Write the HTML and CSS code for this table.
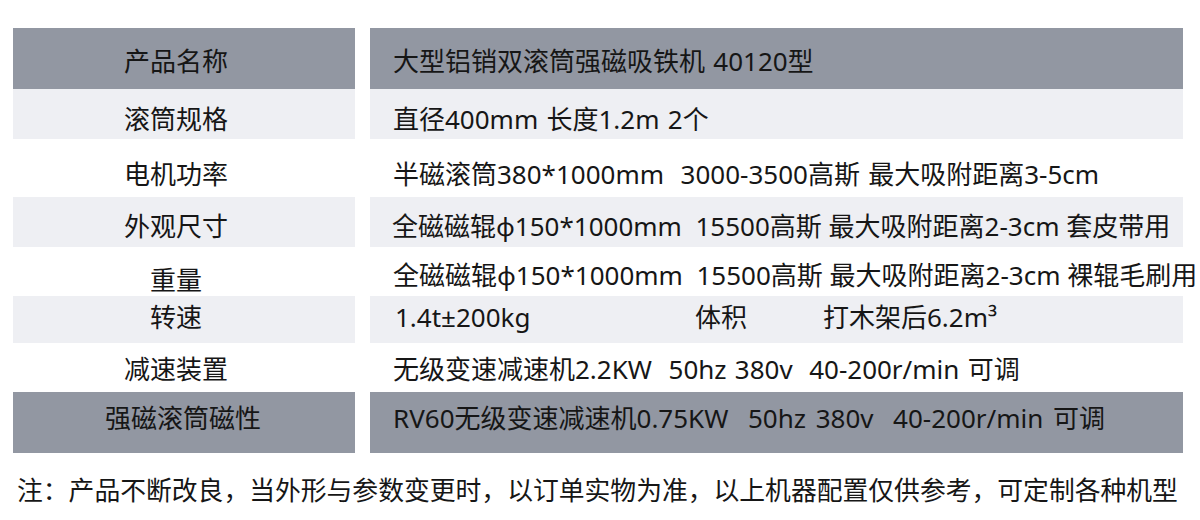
FILE: index.html
```html
<!DOCTYPE html>
<html lang="zh-CN">
<head>
<meta charset="utf-8">
<title>参数表</title>
<link rel="stylesheet" href="styles.css">
</head>
<body>
<div class="page">
  <div class="spec">
    <div class="row dark r1"><div class="key">产品名称</div><div class="val">大型铝销双滚筒强磁吸铁机 40120型</div></div>
    <div class="row light r2"><div class="key">滚筒规格</div><div class="val">直径400mm 长度1.2m 2个</div></div>
    <div class="row r3"><div class="key">电机功率</div><div class="val">半磁滚筒380*1000mm  3000-3500高斯 最大吸附距离3-5cm</div></div>
    <div class="row light r4"><div class="key">外观尺寸</div><div class="val">全磁磁辊φ150*1000mm  15500高斯 最大吸附距离2-3cm 套皮带用</div></div>
    <div class="row r5"><div class="key">重量</div><div class="val">全磁磁辊φ150*1000mm  15500高斯 最大吸附距离2-3cm 裸辊毛刷用</div></div>
    <div class="row light r6"><div class="key">转速</div><div class="val"><span class="c1">1.4t±200kg</span><span class="c2">体积</span><span>打木架后6.2m³</span></div></div>
    <div class="row r7"><div class="key">减速装置</div><div class="val">无级变速减速机2.2KW  50hz 380v  40-200r/min 可调</div></div>
    <div class="row dark r8"><div class="key">强磁滚筒磁性</div><div class="val">RV60无级变速减速机0.75KW  50hz 380v  40-200r/min 可调</div></div>
  </div>
  <p class="note">注：产品不断改良，当外形与参数变更时，以订单实物为准，以上机器配置仅供参考，可定制各种机型</p>
</div>
</body>
</html>
```

FILE: styles.css
```css
html, body {
  margin: 0;
  padding: 0;
  background: #ffffff;
}

.page {
  width: 1200px;
  height: 520px;
  padding: 28px 0 0 13px;
  box-sizing: border-box;
  font-family: "Noto Sans", "Noto Sans CJK SC", sans-serif;
  color: #161616;
  overflow: hidden;
}

.spec {
  display: flex;
  flex-direction: column;
}

.row {
  display: grid;
  grid-template-columns: 342px 813px;
  column-gap: 15px;
  font-size: 26px;
  line-height: 26px;
  white-space: pre;
}

.key,
.val {
  box-sizing: border-box;
}

.key {
  text-align: center;
  padding-right: 16px;
}

.val {
  padding-left: 23px;
  word-spacing: 1.5px;
}

.dark .key,
.dark .val {
  background: #9297a2;
}

.light .key,
.light .val {
  background: #eeeff3;
}

.r1 { height: 61px; }
.r1 .key, .r1 .val { padding-top: 20px; }

.r2 { height: 50px; }
.r2 .key, .r2 .val { padding-top: 17px; }

.r3 { height: 58px; }
.r3 .key, .r3 .val { padding-top: 22px; }

.r4 { height: 50px; }
.r4 .key, .r4 .val { padding-top: 16px; }
.r4 .val { padding-left: 22px; word-spacing: 0; }

.r5 { height: 49px; }
.r5 .key { padding-top: 20px; }
.r5 .val { padding-top: 15px; word-spacing: 0; }

.r6 { height: 47px; }
.r6 .key, .r6 .val { padding-top: 8px; }
.r6 .val { padding-left: 25px; }

.r7 { height: 49px; }
.r7 .key, .r7 .val { padding-top: 13px; }

.r8 { height: 61px; }
.r8 .key, .r8 .val { padding-top: 13px; }
.r8 .key { padding-right: 2px; }
.r8 .val { word-spacing: 3px; }

.c1 {
  display: inline-block;
  width: 300px;
}

.c2 {
  display: inline-block;
  width: 128px;
}

.note {
  margin: 24px 0 0 4px;
  font-size: 25.8px;
  line-height: 26px;
  white-space: nowrap;
}
```
